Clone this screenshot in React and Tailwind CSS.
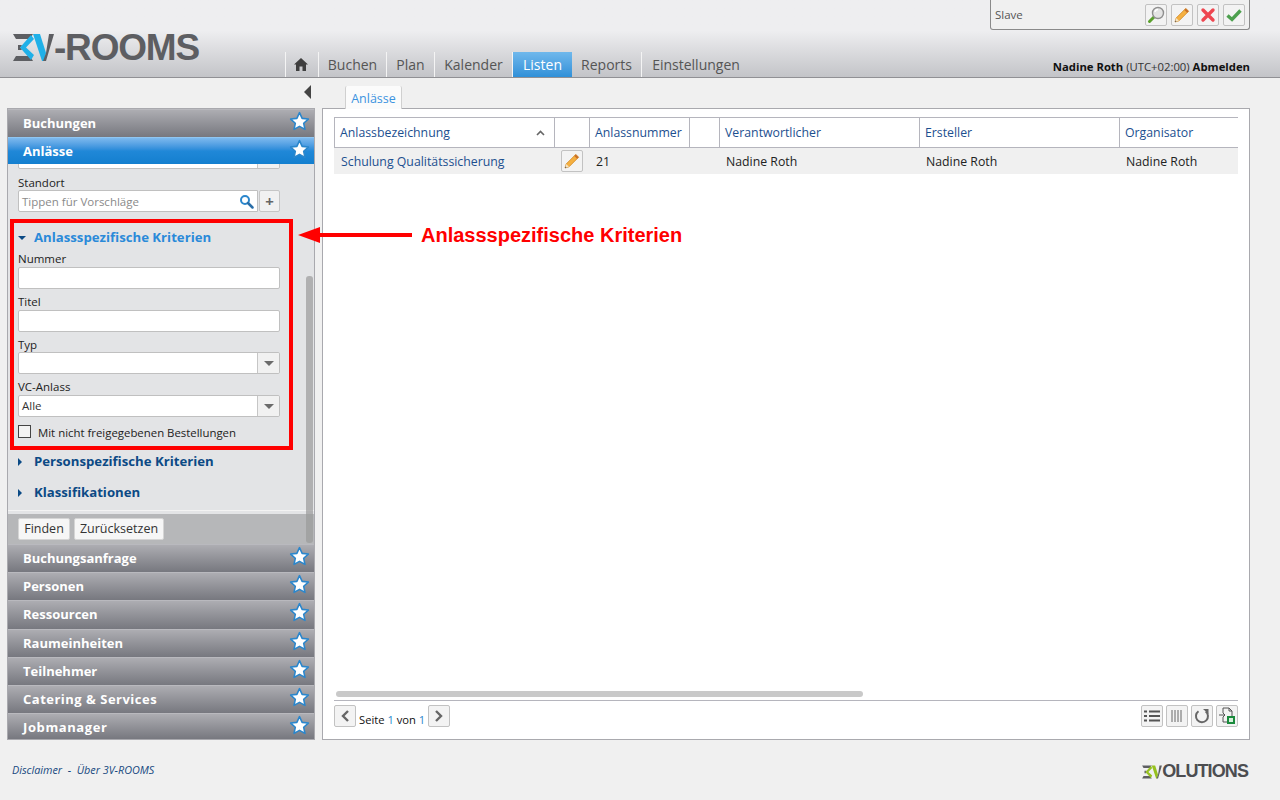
import React from "react";

const font = { fontFamily: '"Open Sans","Noto Sans",sans-serif' };

function Star() {
  return (
    <svg width="21" height="21" viewBox="0 0 20 20" className="shrink-0 mt-[1px]">
      <path d="M10 1.600l2.500 5.400 5.900.7-4.400 4 1.200 5.800L10 14.600l-5.200 2.900L6 11.700l-4.400-4 5.900-.7z" fill="#fff" stroke="#2a86cc" strokeWidth="1.500" strokeLinejoin="round" />
    </svg>
  );
}

function Pencil() {
  return (
    <svg width="18" height="18" viewBox="0 0 18 18">
      <path d="M2 16l1.200-4L12.800 2.400l2.800 2.800L6 14.800z" fill="#f5b041" stroke="#d0851c" strokeWidth=".8" />
      <path d="M12.800 2.400l2.800 2.800-1.500 1.500-2.800-2.800z" fill="#c9702a" />
      <path d="M2 16l1.200-4 2.800 2.800z" fill="#f4e3c4" />
      <path d="M2 16l.4-1.500 1.100 1.100z" fill="#444" />
    </svg>
  );
}

function IconBtn({ children, w = "w-[22px]" }) {
  return (
    <div className={`${w} h-[22px] flex items-center justify-center rounded-[2px] border border-[#c2c2c2] bg-[#f3f3f3]`}>
      {children}
    </div>
  );
}

function SideHead({ title, active, h = "h-[28px]", track = "" }) {
  return (
    <div
      className={`${h} shrink-0 overflow-hidden flex items-start justify-between pl-[15px] pr-[4px] border-t ${
        active
          ? "border-[#8fc6f2] bg-gradient-to-b from-[#7db9ee] via-[#2088d8] to-[#137fcf]"
          : "border-[#b9b9be] bg-gradient-to-b from-[#adadb2] to-[#77787f]"
      }`}
    >
      <span className={`text-[13px] font-bold leading-[27px] text-white ${track}`}>{title}</span>
      <Star />
    </div>
  );
}

function Caret() {
  return (
    <div className="w-[22px] h-full border-l border-[#c6c6c6] bg-[#f1f1f1] flex items-center justify-center rounded-r-[2px]">
      <div className="w-0 h-0 border-l-[5px] border-r-[5px] border-t-[5px] border-l-transparent border-r-transparent border-t-[#6b6b6b]" />
    </div>
  );
}

function Field({ label, select, value, lh = "h-[21px]" }) {
  return (
    <div>
      <div className={`${lh} pt-[5px] text-[11.500px] leading-[16px] text-[#222]`}>{label}</div>
      <div className="h-[22px] w-[262px] flex items-stretch justify-between bg-white border border-[#c0c0c0] rounded-[2px] text-[11.500px] text-[#333]">
        <span className="pl-[3px] leading-[20px]">{value}</span>
        {select && <Caret />}
      </div>
    </div>
  );
}

function Section({ title, open }) {
  return (
    <div className="flex items-center h-[20px] pt-[2px] text-[13.200px] font-bold">
      {open ? (
        <div className="w-0 h-0 mr-[8px] border-l-[4px] border-r-[4px] border-t-[4px] border-l-transparent border-r-transparent border-t-[#0b4a85]" />
      ) : (
        <div className="w-0 h-0 mr-[12px] border-t-[4px] border-b-[4px] border-l-[4px] border-t-transparent border-b-transparent border-l-[#0b4a85]" />
      )}
      <span className={open ? "text-[#2a8ad9]" : "text-[#0c4a85]"}>{title}</span>
    </div>
  );
}

function Th({ w, children, last, sort }) {
  return (
    <div className={`${w} h-full flex items-center justify-between pl-[5px] pr-[9px] pt-[1px] text-[12.300px] text-[#1c4f8f] ${last ? "" : "border-r border-[#b5b5bd]"}`}>
      <span>{children}</span>
      {sort && (
        <svg width="9" height="6" viewBox="0 0 9 6"><path d="M1 5l3.500-3.500L8 5" fill="none" stroke="#666" strokeWidth="1.600" /></svg>
      )}
    </div>
  );
}

function Td({ w, children, cls = "text-[#222]", pl = "pl-[6px]" }) {
  return <div className={`${w} ${pl} pt-[2px] text-[12.300px] ${cls}`}>{children}</div>;
}

function Mark({ color, w, h }) {
  return (
    <svg width={w} height={h} viewBox="0 0 41 29" className="shrink-0">
      <path d="M0 1H20L17 6H3zM3 23H17L20 28H0zM5 12h4l-1.500 2.500L9 17H5z" fill="#5d5e62" />
      <path d="M18 2L7 14.500 18 27l3-5-8-7.500L21 6z" fill={color} />
      <path d="M20 1h7l6 19-2 8h-2z" fill={color} />
      <path d="M33 20L36 1h5L33 28h-3z" fill="#5d5e62" />
    </svg>
  );
}

export default function App() {
  const sideRest = [
    ["Buchungsanfrage", "h-[28px]", ""],
    ["Personen", "h-[28px]", ""],
    ["Ressourcen", "h-[29px]", ""],
    ["Raumeinheiten", "h-[28px]", ""],
    ["Teilnehmer", "h-[28px]", ""],
    ["Catering & Services", "h-[28px]", "tracking-[0.500px]"],
    ["Jobmanager", "h-[26px]", "tracking-[0.600px]"],
  ];
  const nav = [
    ["Buchen", "w-[68px]"],
    ["Plan", "w-[48px]"],
    ["Kalender", "w-[78px]"],
    ["Listen", "w-[59px]", true],
    ["Reports", "w-[70px]"],
    ["Einstellungen", "w-[108px]", false, true],
  ];
  return (
    <div className="relative w-[1280px] h-[800px] overflow-hidden bg-[#f0f0f0]" style={font}>
      {/* Header */}
      <header className="h-[78px] border-b border-[#909094] bg-gradient-to-b from-[#eeeef0] from-40% to-[#c3c4c8]">
        <div className="h-[30px] flex justify-end pr-[30px]">
          <div className="w-[260px] h-[30px] flex items-center justify-between pl-[4px] pr-[4px] border border-t-0 border-[#8a8a8a] rounded-b-[3px] bg-[#f0f0f0]">
            <span className="text-[11.500px] text-[#555]">Slave</span>
            <div className="flex gap-[4px]">
              <IconBtn>
                <svg width="18" height="18" viewBox="0 0 18 18">
                  <path d="M7.500 10.500L2.500 15.500" stroke="#5aa02c" strokeWidth="3" strokeLinecap="round" />
                  <circle cx="11" cy="7" r="5.500" fill="#e4e4e4" stroke="#8f8f8f" strokeWidth="1.400" />
                  <path d="M8 6a3 3 0 0 1 3-2.500" fill="none" stroke="#fff" strokeWidth="1.400" />
                </svg>
              </IconBtn>
              <IconBtn><Pencil /></IconBtn>
              <IconBtn>
                <svg width="16" height="16" viewBox="0 0 16 16"><path d="M3 3l10 10M13 3L3 13" stroke="#ee4650" strokeWidth="3.400" strokeLinecap="round" /></svg>
              </IconBtn>
              <IconBtn>
                <svg width="18" height="16" viewBox="0 0 18 16"><path d="M2.500 8.500l4.500 4L15.500 3.500" fill="none" stroke="#4da04e" strokeWidth="3.400" /></svg>
              </IconBtn>
            </div>
          </div>
        </div>
        <div className="h-[47px] flex items-end">
          <div className="w-[285px] h-full flex items-start pl-[13px] pt-[3px]">
            <Mark color="#1fb0e8" w={41} h={29} />
            <span className="text-[37px] font-bold leading-[29px] tracking-[-1.200px] text-[#5d5e62]" style={{ fontFamily: '"Liberation Sans",sans-serif' }}>-ROOMS</span>
          </div>
          <nav className="flex h-[25px]">
            <div className="w-[34px] flex items-center justify-center pr-[2px] border-l border-r border-[#f4f4f4]">
              <svg width="14" height="13" viewBox="0 0 14 13"><path d="M7 0L0 6.500h2V13h3.500V8.500h3V13H12V6.500h2z" fill="#3f3f3f" /></svg>
            </div>
            {nav.map(([t, w, active, last]) => (
              <div key={t} className={`${w} flex items-center justify-center text-[14px] ${active ? "bg-gradient-to-b from-[#6fb8ec] to-[#2f90d8] text-white" : `${last ? "" : "border-r border-[#f4f4f4]"} text-[#555]`}`}>
                {t}
              </div>
            ))}
          </nav>
          <div className="flex-1 h-[25px] flex items-center justify-end pr-[30px] pt-[6px] text-[11.300px] text-[#111]">
            <b>Nadine Roth</b>&nbsp;<span className="text-[#333]">(UTC+02:00)</span>&nbsp;<b>Abmelden</b>
          </div>
        </div>
      </header>

      {/* Main */}
      <main className="flex pl-[7px] gap-[7px]">
        <div className="w-[308px]">
          <div className="h-[30px] flex items-center justify-end pr-[4px] pb-[2px]">
            <div className="w-0 h-0 border-t-[7px] border-b-[7px] border-r-[7px] border-t-transparent border-b-transparent border-r-[#444]" />
          </div>
          <aside className="relative h-[632px] border border-[#a9a9ae] bg-[#e3e4e6] flex flex-col">
            <SideHead title="Buchungen" />
            <SideHead title="Anlässe" active h="h-[27px]" />
            <div className="h-[346px] shrink-0 overflow-hidden px-[10px]">
              <div className="h-[22px] -mt-[17px] w-[262px] flex items-stretch justify-end bg-white border border-[#c0c0c0] rounded-[2px]"><Caret /></div>
              <div>
                <div className="h-[21px] pt-[6px] text-[11.500px] leading-[16px] text-[#222]">Standort</div>
                <div className="flex h-[22px] w-[262px] items-stretch">
                  <div className="flex-1 flex items-center justify-between bg-white border border-[#c0c0c0] rounded-l-[2px] pl-[3px] pr-[3px] pt-[1px] text-[11.500px] text-[#8a8a8a]">
                    <span>Tippen für Vorschläge</span>
                    <svg width="15" height="15" viewBox="0 0 15 15"><circle cx="6" cy="6" r="4" fill="none" stroke="#2a86cc" strokeWidth="2" /><path d="M9 9l4.500 4.500" stroke="#2a6ea8" strokeWidth="2.500" strokeLinecap="round" /></svg>
                  </div>
                  <div className="w-[21px] ml-px flex items-center justify-center bg-[#f1f1f1] border border-[#c6c6c6] rounded-[2px] text-[15px] font-bold leading-none text-[#666]">+</div>
                </div>
              </div>
              <div className="mt-[15px] -mb-[1px]"><Section title="Anlassspezifische Kriterien" open /></div>
              <Field label="Nummer" />
              <Field label="Titel" />
              <Field label="Typ" select lh="h-[20px]" />
              <Field label="VC-Anlass" select value="Alle" />
              <div className="mt-[8px] h-[13px] flex items-center">
                <div className="w-[13px] h-[13px] border border-[#444] bg-[#f3f3f3] mr-[7px]" />
                <span className="text-[11.400px] pt-[2px] text-[#222]">Mit nicht freigegebenen Bestellungen</span>
              </div>
              <div className="mt-[13px]"><Section title="Personspezifische Kriterien" /></div>
              <div className="mt-[11px]"><Section title="Klassifikationen" /></div>
            </div>
            <div className="h-[4px] shrink-0 border-t border-[#f3f3f3]" />
            <div className="h-[30px] shrink-0 flex items-center gap-[4px] pl-[10px] bg-[#b6b7b9]">
              <div className="h-[22px] w-[52px] flex items-center justify-center bg-[#f6f6f6] border border-[#d5d5d5] rounded-[2px] text-[12.500px] text-[#333]">Finden</div>
              <div className="h-[22px] w-[90px] flex items-center justify-center bg-[#f6f6f6] border border-[#d5d5d5] rounded-[2px] text-[12.500px] text-[#333]">Zurücksetzen</div>
            </div>
            {sideRest.map(([t, h, track]) => <SideHead key={t} title={t} h={h} track={track} />)}
            <div className="absolute left-[298px] top-[167px] w-[7px] h-[267px] rounded-[3px] bg-[#9a9a9a] opacity-70" />
          </aside>
        </div>

        <div className="w-[928px]">
          <div className="h-[30px] flex items-end pl-[23px]">
            <div className="w-[57px] h-[23px] pt-[4px] flex items-center justify-center rounded-t-[2px] bg-[#fbfbfb] border-l border-r border-[#d0d0d0] text-[12.500px] text-[#3b93e0] -mb-px relative">Anlässe</div>
          </div>
          <section className="h-[632px] border border-[#a9a9ae] bg-white flex flex-col px-[11px] pt-[8px] pb-[12px]">
            <div className="h-[30px] flex border border-b-0 border-r-0 border-[#b5b5bd] bg-white">
              <Th w="w-[220px]" sort>Anlassbezeichnung</Th>
              <Th w="w-[35px]"></Th>
              <Th w="w-[100px]">Anlassnummer</Th>
              <Th w="w-[30px]"></Th>
              <Th w="w-[200px]">Verantwortlicher</Th>
              <Th w="w-[200px]">Ersteller</Th>
              <Th w="w-[118px]" last>Organisator</Th>
            </div>
            <div className="h-[27px] flex items-center bg-[#f0f0f0] border-t border-[#b5b5bd]">
              <Td w="w-[221px]" cls="text-[#1c4f8f]" pl="pl-[7px]">Schulung Qualitätssicherung</Td>
              <div className="w-[33px] flex justify-center"><IconBtn><Pencil /></IconBtn></div>
              <Td w="w-[132px]" pl="pl-[8px]">21</Td>
              <Td w="w-[200px]">Nadine Roth</Td>
              <Td w="w-[200px]">Nadine Roth</Td>
              <Td w="w-[118px]">Nadine Roth</Td>
            </div>
            <div className="flex-1" />
            <div className="h-[6px] w-[527px] ml-[2px] rounded-[3px] bg-[#c9c9c9]" />
            <div className="mt-[3px] h-[27px] flex items-end justify-between border-t border-[#b5b5bd]">
              <div className="flex items-end gap-[3px] text-[11.200px] text-[#111]">
                <IconBtn>
                  <svg width="10" height="14" viewBox="0 0 10 14"><path d="M8 2L3 7l5 5" fill="none" stroke="#666" strokeWidth="2.400" /></svg>
                </IconBtn>
                <span className="leading-[14px]">Seite <span className="text-[#2a86cc]">1</span> von <span className="text-[#2a86cc]">1</span></span>
                <IconBtn>
                  <svg width="10" height="14" viewBox="0 0 10 14"><path d="M2 2l5 5-5 5" fill="none" stroke="#666" strokeWidth="2.400" /></svg>
                </IconBtn>
              </div>
              <div className="flex gap-[3px]">
                <IconBtn>
                  <svg width="16" height="12" viewBox="0 0 16 12"><path d="M0 1.500h3M5 1.500h11M0 6h3M5 6h11M0 10.500h3M5 10.500h11" stroke="#555" strokeWidth="2" /></svg>
                </IconBtn>
                <IconBtn>
                  <svg width="12" height="12" viewBox="0 0 12 12"><path d="M1 0v12M4 0v12M7 0v12M10 0v12" stroke="#666" strokeWidth="1" /></svg>
                </IconBtn>
                <IconBtn>
                  <svg width="16" height="16" viewBox="0 0 16 16"><path d="M4.500 3.300A6 6 0 1 0 11.700 3.500" fill="none" stroke="#666" strokeWidth="2" /><path d="M9 1h5.500v5z" fill="#666" /></svg>
                </IconBtn>
                <IconBtn>
                  <svg width="18" height="18" viewBox="0 0 18 18">
                    <path d="M5 6V1h6l3 3v5M11 1v3h3M5 10v5h4" fill="none" stroke="#555" />
                    <path d="M1 8h6M5 6l2 2-2 2" fill="none" stroke="#555" />
                    <rect x="9" y="9" width="8" height="8" fill="#1a8a3c" />
                    <rect x="11" y="11" width="4" height="4" fill="#d8efdc" />
                  </svg>
                </IconBtn>
              </div>
            </div>
          </section>
        </div>
      </main>

      {/* Footer */}
      <footer className="flex items-center justify-between pl-[12px] pr-[32px] pt-[22px]">
        <span className="text-[10.800px] italic text-[#17497f]">Disclaimer&nbsp; -&nbsp; Über 3V-ROOMS</span>
        <div className="flex items-center pt-[2px]">
          <Mark color="#96c11f" w={20} h={14} />
          <span className="text-[18px] font-bold tracking-[-0.900px] leading-[15px] text-[#4c4d50]" style={{ fontFamily: '"Liberation Sans",sans-serif' }}>OLUTIONS</span>
        </div>
      </footer>

      {/* Annotation overlay */}
      <div className="absolute left-[10px] top-[219px] w-[283px] h-[231px] border-4 border-[#ff0000] pointer-events-none" />
      <svg className="absolute left-[297px] top-[226px]" width="116" height="18" viewBox="0 0 116 18">
        <path d="M1 9L23 1v6h92v4H23v6z" fill="#ff0000" />
      </svg>
      <div className="absolute left-[421px] top-[222px] text-[20px] leading-[26px] font-bold text-[#ff0000]" style={{ fontFamily: '"Liberation Sans",sans-serif' }}>
        Anlassspezifische Kriterien
      </div>
    </div>
  );
}
